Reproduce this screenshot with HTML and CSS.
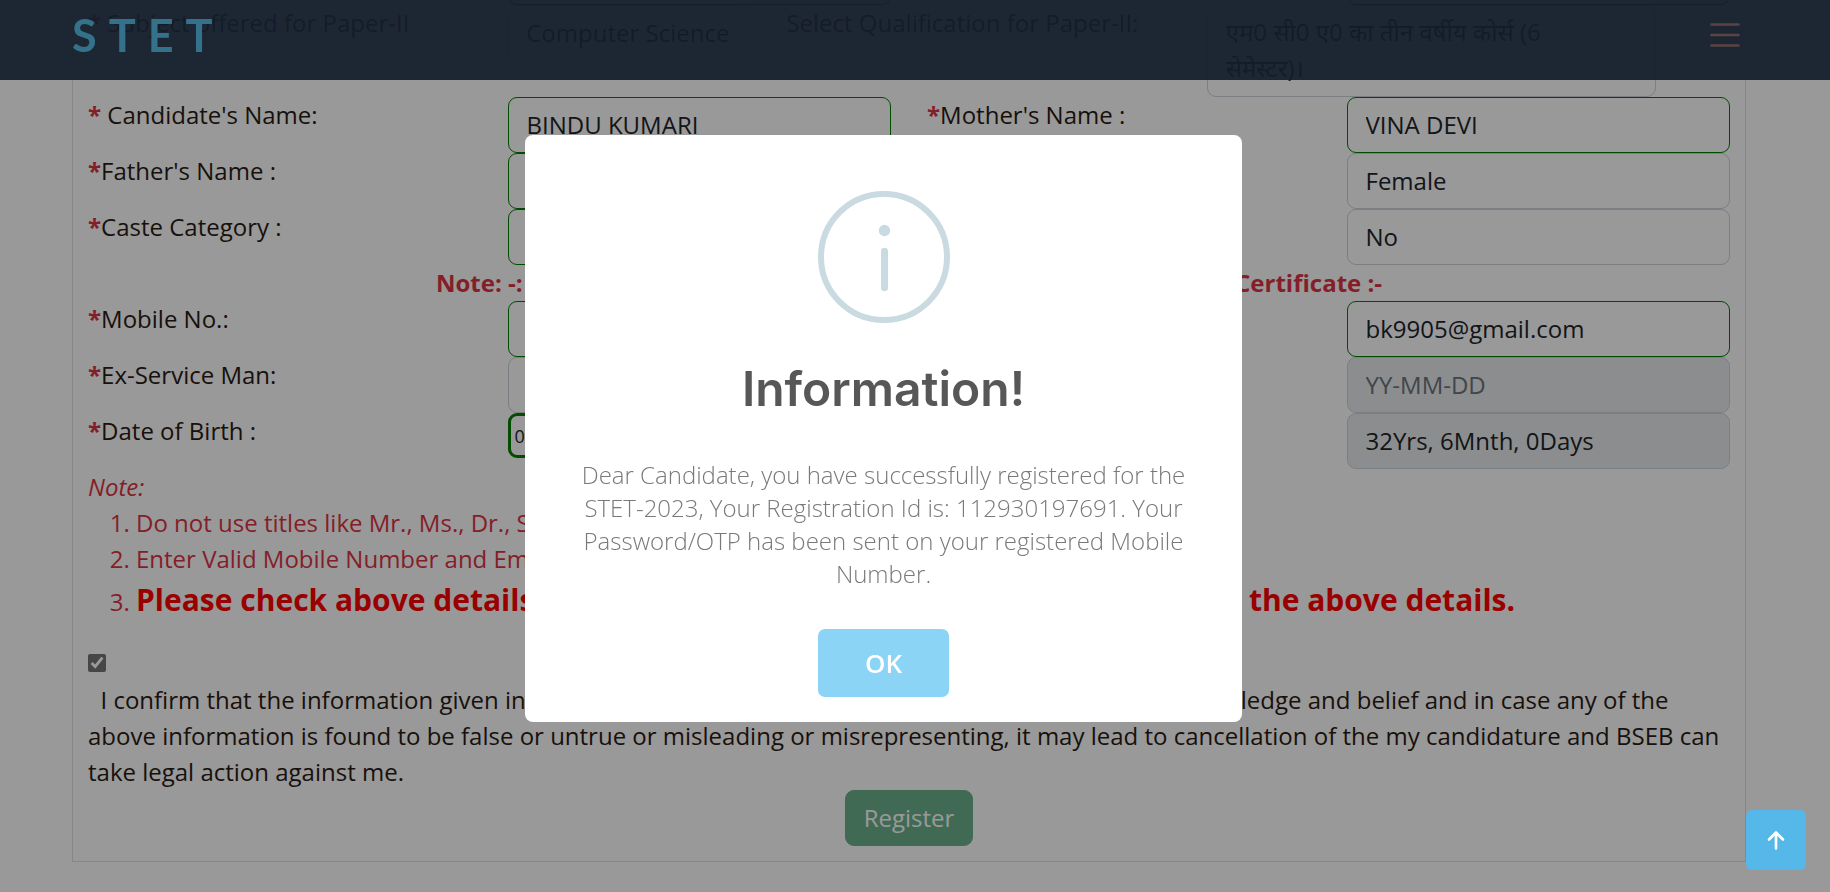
FILE: index.html
```html
<!DOCTYPE html>
<html lang="en">
<head>
<meta charset="utf-8">
<title>STET Registration</title>
<link rel="stylesheet" href="styles.css">
</head>
<body>
<header class="topbar">
  <a class="logo" href="#">STET</a>
  <button class="menu" type="button" aria-label="Menu">
    <svg viewBox="0 0 30 26" width="30" height="26"><path d="M1.500 2.500h27M1.500 13h27M1.500 23.500h27" stroke="currentColor" stroke-width="2.600" stroke-linecap="round"/></svg>
  </button>
</header>

<main class="page">
  <form class="panel">
    <div class="row row-clipped">
      <span></span><input class="field valid" type="text" aria-label="Subject for Paper-I">
      <span></span><input class="field valid" type="text" aria-label="Qualification for Paper-I">
    </div>
    <div class="row row-paper">
      <label class="label" for="subject"><b class="req">*</b> Subject offered for Paper-II</label>
      <input class="field" id="subject" type="text" value="Computer Science">
      <label class="label" for="qual">Select Qualification for Paper-II:</label>
      <textarea class="field area" id="qual" rows="2">एम0 सी0 ए0 का तीन वर्षीय कोर्स (6 सेमेस्टर)।</textarea>
    </div>
    <div class="row">
      <label class="label" for="name"><b class="req">*</b> Candidate's Name:</label>
      <input class="field valid" id="name" type="text" value="BINDU KUMARI">
      <label class="label" for="mother"><b class="req">*</b>Mother's Name :</label>
      <input class="field valid" id="mother" type="text" value="VINA DEVI">
    </div>
    <div class="row">
      <label class="label" for="father"><b class="req">*</b>Father's Name :</label>
      <input class="field valid" id="father" type="text">
      <span></span>
      <select class="field" aria-label="Gender"><option>Female</option></select>
    </div>
    <div class="row">
      <label class="label" for="caste"><b class="req">*</b>Caste Category :</label>
      <input class="field valid" id="caste" type="text">
      <span></span>
      <select class="field" aria-label="Disability"><option>No</option></select>
    </div>
    <p class="notice">Note: -: Mobile Number, Email &amp; Date of Birth as per Matriculation Certificate :-</p>
    <div class="row">
      <label class="label" for="mobile"><b class="req">*</b>Mobile No.:</label>
      <input class="field valid" id="mobile" type="text">
      <span></span>
      <input class="field valid" type="email" aria-label="Email" value="bk9905@gmail.com">
    </div>
    <div class="row">
      <label class="label" for="exservice"><b class="req">*</b>Ex-Service Man:</label>
      <input class="field" id="exservice" type="text">
      <span></span>
      <input class="field" type="text" aria-label="Service period" placeholder="YY-MM-DD" disabled>
    </div>
    <div class="row">
      <label class="label" for="dob"><b class="req">*</b>Date of Birth :</label>
      <input class="field dob" id="dob" type="text" value="01-02-1991">
      <span></span>
      <input class="field" type="text" aria-label="Age" value="32Yrs, 6Mnth, 0Days" disabled>
    </div>
    <div class="notes">
      <em>Note:</em>
      <ol class="list">
        <li>Do not use titles like Mr., Ms., Dr., Shri etc.</li>
        <li>Enter Valid Mobile Number and Email Id.</li>
        <li><strong class="warn">Please check above details clearly before registration, you can not change the above details.</strong></li>
      </ol>
    </div>
    <div class="confirm">
      <input class="tick" id="agree" type="checkbox" checked>
      <label class="agree" for="agree">&nbsp; I confirm that the information given in this form is true, complete and accurate to the best of my knowledge and belief and in case any of the above information is found to be false or untrue or misleading or misrepresenting, it may lead to cancellation of the my candidature and BSEB can take legal action against me.</label>
    </div>
    <div class="actions"><button class="register" type="button">Register</button></div>
  </form>
</main>

<div class="overlay"></div>

<section class="modal" role="dialog" aria-labelledby="modal-title">
  <svg class="info" viewBox="0 0 132 132" width="132" height="132">
    <circle cx="66" cy="66" r="63" fill="none" stroke="#c9dae1" stroke-width="6"/>
    <circle cx="66.500" cy="39.500" r="5.700" fill="#c9dae1"/>
    <rect x="63" y="57" width="7" height="43" rx="3" fill="#c9dae1"/>
  </svg>
  <h2 class="modal-title" id="modal-title">Information!</h2>
  <p class="modal-text">Dear Candidate, you have successfully registered for the STET-2023, Your Registration Id is: 112930197691. Your Password/OTP has been sent on your registered Mobile Number.</p>
  <button class="ok" type="button">OK</button>
</section>

<a class="to-top" href="#" aria-label="Back to top">
  <svg viewBox="0 0 20 20" width="20" height="20"><path d="M10 18.500V2.500M3 9.500L10 2.500L17 9.500" fill="none" stroke="#fff" stroke-width="2.600" stroke-linecap="round" stroke-linejoin="round"/></svg>
</a>
</body>
</html>
```
FILE: styles.css
```css
* { box-sizing: border-box; }

body {
  margin: 0;
  min-height: 100vh;
  overflow: hidden;
  background: #fff;
  color: #2b1c14;
  font: 24px/36px "Open Sans", "Noto Sans", sans-serif;
}

.topbar {
  position: fixed;
  inset: 0 0 auto 0;
  z-index: 10;
  height: 80px;
  padding: 0 90px 10px 72px;
  display: flex;
  align-items: center;
  justify-content: space-between;
  background: rgba(32, 50, 70, 0.92);
}

.logo {
  color: #57bde8;
  font: 700 45px/60px Lato, sans-serif;
  letter-spacing: 12px;
  text-decoration: none;
}

.menu {
  display: flex;
  padding: 0;
  border: 0;
  background: none;
  color: #9a7070;
}

.page { padding: 0 84px 0 72px; }

.panel {
  padding: 0 15px 15px;
  border: 1px solid #dee2e6;
  border-top: 0;
}

.row {
  display: grid;
  grid-template-columns: repeat(4, minmax(0, 1fr));
  column-gap: 36px;
  align-items: start;
  min-height: 56px;
}

.row-clipped { margin-top: -51px; }
.row-paper { grid-template-columns: 383fr 243fr 384fr 449fr 38fr; }

.req { color: #dc3545; }

.field {
  display: block;
  width: 100%;
  height: 56px;
  padding: 8px 18px 10px;
  border: 1px solid #ced4da;
  border-radius: 9px;
  background: #fff;
  color: #212529;
  font: inherit;
  appearance: none;
}

select.field { padding: 9px 18px; }
.field::placeholder { color: #6c757d; }
.field:disabled { background: #e9ecef; color: #212529; }
.valid { border-color: green; }

.area {
  height: 92px;
  padding-right: 60px;
  resize: none;
  overflow: hidden;
}

.dob {
  height: 45px;
  padding: 3px 4px;
  border: 3px solid green;
  font-size: 18px;
}

.notice {
  margin: 0;
  color: #dc3545;
  font-weight: 700;
  text-align: center;
}

.notes { color: #dc3545; }

.list {
  margin: 0;
  padding-left: 48px;
}

.warn {
  color: red;
  font-size: 30px;
  line-height: 45px;
}

.confirm { padding-top: 32px; }

.tick {
  display: block;
  width: 18px;
  height: 18px;
  margin: 0 0 10px;
  accent-color: #767676;
}

.agree { display: block; }

.actions {
  display: flex;
  justify-content: center;
}

.register {
  padding: 9px 18px;
  border: 1px solid #6bb18d;
  border-radius: 9px;
  background: #6bb18d;
  color: #fff;
  font: inherit;
}

.overlay {
  position: fixed;
  inset: 0;
  z-index: 20;
  background: rgba(0, 0, 0, 0.4);
}

.modal {
  position: fixed;
  top: 135px;
  left: 50%;
  z-index: 30;
  width: 717px;
  margin-left: -390px;
  padding: 56px 26px 25px;
  display: flex;
  flex-direction: column;
  align-items: center;
  border-radius: 8px;
  background: #fff;
  text-align: center;
}

.modal-title {
  margin: 36px 0 39px;
  color: #575757;
  font: 600 48px/60px Inter, sans-serif;
}

.modal-text {
  margin: 0;
  padding: 0 24px;
  color: #797979;
  font-weight: 300;
  line-height: 33px;
}

.ok {
  margin-top: 39px;
  padding: 16px 47px;
  border: 0;
  border-radius: 7px;
  background: #8cd4f5;
  color: #fff;
  font: 600 26px/36px "Open Sans", sans-serif;
}

.to-top {
  position: fixed;
  right: 24px;
  bottom: 22px;
  z-index: 40;
  width: 60px;
  height: 60px;
  display: flex;
  align-items: center;
  justify-content: center;
  border-radius: 6px;
  background: #56b8e8;
}
```
